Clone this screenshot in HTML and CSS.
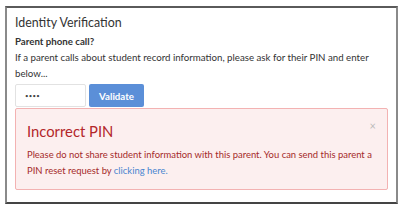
FILE: index.html
```html
<!DOCTYPE html>
<html>
<head>
<meta charset="utf-8">
<link rel="stylesheet" href="styles.css">
</head>
<body>
<div class="frame">
  <h1 class="title">Identity Verification</h1>
  <div class="label">Parent phone call?</div>
  <p class="desc">If a parent calls about student record information, please ask for their PIN and enter below...</p>
  <div class="form">
    <input class="pin" type="text" value="••••">
    <button class="btn">Validate</button>
  </div>
  <div class="alert">
    <span class="close">×</span>
    <div class="alert-title">Incorrect PIN</div>
    <p class="alert-text">Please do not share student information with this parent. You can send this parent a PIN reset request by <a href="#">clicking here.</a></p>
  </div>
</div>
</body>
</html>
```
FILE: styles.css
```css
html, body { margin: 0; padding: 0; background: #fff; }
body { font-family: Lato, "Liberation Sans", sans-serif; color: #333; font-size: 9.7px; }
.frame {
  margin: 6px 0 0 5px;
  width: 393px;
  height: 198px;
  border: 2px solid #8a8a8a;
  border-top-color: #5a5a5a;
  border-bottom-color: #444;
  padding: 0 8px;
  box-sizing: border-box;
}
.title { margin: 7px 0 0; font-size: 12.4px; font-weight: 400; line-height: 16px; color: #333; }
.label { margin-top: 2px; font-weight: 700; line-height: 16px; }
.desc { margin: 0; line-height: 16px; }
.form { display: flex; gap: 3px; margin-top: 3px; height: 23px; }
.pin {
  width: 71px; height: 23px; box-sizing: border-box; border: 1px solid #e2e2e2; border-radius: 2px;
  font-size: 6px; letter-spacing: 0.3px; padding: 0 9px; color: #444; font-family: inherit; margin: 0;
}
.btn {
  width: 55px; height: 23px; border: 0; border-radius: 2px; background: #5b8fd8; color: #fff;
  font-family: inherit; font-weight: 700; font-size: 9.7px; padding: 0; margin: 0;
}
.alert {
  position: relative;
  margin-top: 1px;
  background: #fcefef; border: 1px solid #f3b2b2; border-radius: 2px;
  height: 82px; box-sizing: border-box;
  padding: 13px 8px 0 11px;
}
.close { position: absolute; right: 11px; top: 11px; color: #bbb; font-size: 11px; line-height: 12px; }
.alert-title { font-size: 14.8px; line-height: 18px; color: #b3262a; }
.alert-text { margin: 7px 0 0; font-size: 9.45px; line-height: 16px; color: #a52a2a; }
.alert-text a { color: #4a86d0; text-decoration: none; }
```
